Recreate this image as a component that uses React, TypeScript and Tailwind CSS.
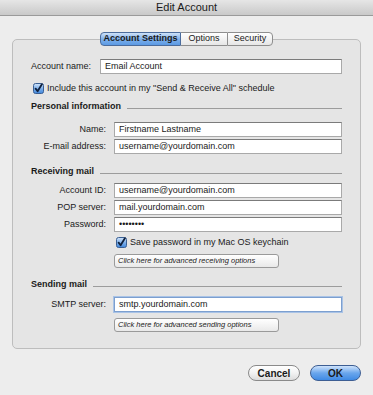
import React from 'react';

// Edit Account sheet (Mac-style mail client settings)

const font = { fontFamily: '"Liberation Sans", Arial, sans-serif' };

function CheckBox() {
  return (
    <svg width="11" height="11" viewBox="0 0 11 11" className="shrink-0">
      <defs>
        <linearGradient id="cbg" x1="0" y1="0" x2="0" y2="1">
          <stop offset="0" stopColor="#d3e6fb" />
          <stop offset="0.5" stopColor="#7fb0ea" />
          <stop offset="1" stopColor="#3f86dc" />
        </linearGradient>
      </defs>
      <rect x="0.5" y="0.5" width="10" height="10" rx="2" fill="url(#cbg)" stroke="#3a5f93" />
      <path d="M2.6 5.6 L4.6 8.2 L8.9 1.2" fill="none" stroke="#10213d" strokeWidth="1.8" strokeLinecap="round" strokeLinejoin="round" />
    </svg>
  );
}

function TextField({ value, focused = false }: { value: string; focused?: boolean }) {
  return (
    <div
      className={`flex-1 h-[15px] bg-white flex items-center px-[4px] text-[9px] text-[#1a1a1a] border ${
        focused
          ? 'border-[#7c9fcf] shadow-[0_0_0_1px_#a9c3e6]'
          : 'border-[#a9a9a9] border-t-[#7b7b7b]'
      }`}
    >
      {value}
    </div>
  );
}

function LabeledField({ label, value, focused }: { label: string; value: string; focused?: boolean }) {
  return (
    <div className="flex items-center h-[15px]">
      <span className="w-[75px] text-right text-[9px] text-[#1a1a1a]">{label}</span>
      <div className="w-[8px]" />
      <TextField value={value} focused={focused} />
    </div>
  );
}

function SectionHeader({ title }: { title: string }) {
  return (
    <div className="flex items-center h-[12px] gap-[6px]">
      <span className="text-[9px] font-bold text-[#1a1a1a]">{title}</span>
      <div className="flex-1 h-px bg-[#9c9c9c] mt-[3px]" />
    </div>
  );
}

function SmallButton({ label }: { label: string }) {
  return (
    <div className="ml-[83px] w-[165px] h-[14px] rounded-[3px] border border-[#9a9a9a] bg-gradient-to-b from-white to-[#e9e9e9] flex items-center px-[3px] text-[7.5px] italic text-[#222]">
      {label}
    </div>
  );
}

export default function App() {
  return (
    <div className="w-[373px] h-[395px] bg-[#ededed] flex flex-col overflow-hidden" style={font}>
      {/* Title bar */}
      <div className="h-[16px] bg-gradient-to-b from-[#e6e6e6] to-[#c9c9c9] border-b border-[#9a9a9a] flex items-center justify-center text-[11px] text-[#1a1a1a]">
        Edit Account
      </div>

      <div className="px-[12px] flex flex-col">
        {/* Tabs */}
        <div className="mt-[16px] -mb-[7px] relative z-10 flex justify-center">
          <div className="flex h-[14px] text-[9px] text-[#1a1a1a]">
            <div className="w-[81px] flex items-center justify-center rounded-l-[4px] border border-[#4b6c9c] bg-gradient-to-b from-[#cfe2f8] via-[#7fb0ea] to-[#5b9ae4] font-bold">
              Account Settings
            </div>
            <div className="w-[46px] flex items-center justify-center border-y border-[#8e8e8e] bg-gradient-to-b from-white to-[#e6e6e6]">
              Options
            </div>
            <div className="w-[46px] flex items-center justify-center rounded-r-[4px] border border-[#8e8e8e] bg-gradient-to-b from-white to-[#e6e6e6]">
              Security
            </div>
          </div>
        </div>

        {/* Group box */}
        <div className="h-[310px] rounded-[5px] border border-[#bdbdbd] bg-[#e5e5e5] pl-[18px] pr-[18px] flex flex-col">
          <div className="mt-[19px] flex items-center h-[15px]">
            <span className="w-[69px] text-[9px] text-[#1a1a1a]">Account name:</span>
            <TextField value="Email Account" />
          </div>

          <div className="mt-[9px] flex items-center h-[11px] gap-[3px] pl-[2px] text-[9px] text-[#1a1a1a]">
            <CheckBox />
            <span>Include this account in my "Send &amp; Receive All" schedule</span>
          </div>

          <div className="mt-[7px]">
            <SectionHeader title="Personal information" />
          </div>
          <div className="mt-[9px]">
            <LabeledField label="Name:" value="Firstname Lastname" />
          </div>
          <div className="mt-[2px]">
            <LabeledField label="E-mail address:" value="username@yourdomain.com" />
          </div>

          <div className="mt-[12px]">
            <SectionHeader title="Receiving mail" />
          </div>
          <div className="mt-[5px]">
            <LabeledField label="Account ID:" value="username@yourdomain.com" />
          </div>
          <div className="mt-[2px]">
            <LabeledField label="POP server:" value="mail.yourdomain.com" />
          </div>
          <div className="mt-[2px]">
            <LabeledField label="Password:" value="••••••••" />
          </div>
          <div className="mt-[5px] ml-[85px] flex items-center h-[11px] gap-[3px] text-[9px] text-[#1a1a1a]">
            <CheckBox />
            <span>Save password in my Mac OS keychain</span>
          </div>
          <div className="mt-[6px]">
            <SmallButton label="Click here for advanced receiving options" />
          </div>

          <div className="mt-[11px]">
            <SectionHeader title="Sending mail" />
          </div>
          <div className="mt-[6px]">
            <LabeledField label="SMTP server:" value="smtp.yourdomain.com" focused />
          </div>
          <div className="mt-[6px]">
            <SmallButton label="Click here for advanced sending options" />
          </div>
        </div>

        {/* Dialog buttons */}
        <div className="mt-[16px] flex justify-end gap-[10px] text-[10px] font-bold text-[#1a1a1a]">
          <div className="w-[52px] h-[16px] rounded-full border border-[#8a8a8a] bg-gradient-to-b from-white via-[#f2f2f2] to-[#dcdcdc] flex items-center justify-center">
            Cancel
          </div>
          <div className="w-[51px] h-[16px] rounded-full border border-[#3d5e93] bg-gradient-to-b from-[#cfe3fb] via-[#6aa6ec] to-[#3f8ae4] flex items-center justify-center">
            OK
          </div>
        </div>
      </div>
    </div>
  );
}
